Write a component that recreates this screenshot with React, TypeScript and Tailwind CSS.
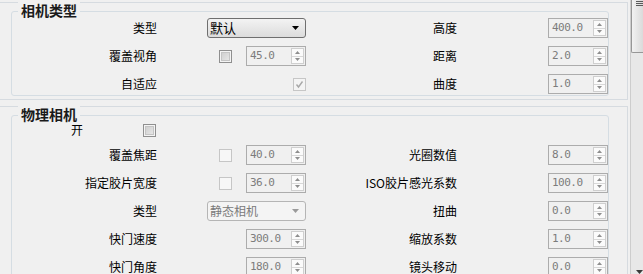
import React from 'react';

const cjk = { fontFamily: '"Noto Sans CJK SC", "Noto Sans", sans-serif' };
const mono = { fontFamily: '"DejaVu Sans Mono", "Liberation Mono", monospace' };

function Arrow({ up, color = '#8e8e8e' }: { up?: boolean; color?: string }) {
  return (
    <svg width="5" height="3" viewBox="0 0 5 3">
      <path d={up ? 'M2.5 0 L5 3 L0 3 Z' : 'M0 0 L5 0 L2.5 3 Z'} fill={color} />
    </svg>
  );
}

function Spin({ value }: { value: string }) {
  return (
    <div className="flex h-[20px] w-[60px] border border-[#acacac] bg-[#f0f0f0]">
      <div
        className="flex flex-1 items-center pl-[3px] text-[11px] tracking-[-0.5px] text-[#7c7c7c]"
        style={mono}
      >
        {value}
      </div>
      <div className="my-[1px] mr-[1px] flex w-[13px] flex-col border border-[#cfcfcf] bg-[#fbfbfb]">
        <div className="flex flex-1 items-center justify-center border-b border-[#d8d8d8]">
          <Arrow up />
        </div>
        <div className="flex flex-1 items-center justify-center">
          <Arrow />
        </div>
      </div>
    </div>
  );
}

function Check({ variant }: { variant: 'on' | 'off' | 'checked' }) {
  if (variant === 'on') {
    return (
      <div className="flex h-[13px] w-[13px] items-center justify-center border border-[#8f8f8f] bg-[#f4f4f4]">
        <div className="h-[9px] w-[9px] border border-[#c4c4c4] bg-linear-to-br from-[#d0d0d0] to-[#e6e6e6]" />
      </div>
    );
  }
  if (variant === 'checked') {
    return (
      <div className="flex h-[13px] w-[13px] items-center justify-center border border-[#c6c6c6] bg-[#f4f4f4]">
        <svg width="9" height="9" viewBox="0 0 9 9">
          <path d="M1.5 4.5 L3.5 7 L7.5 1.5" stroke="#a8a8a8" strokeWidth="1.4" fill="none" />
        </svg>
      </div>
    );
  }
  return <div className="h-[13px] w-[13px] border border-[#c6c6c6] bg-[#f7f7f7]" />;
}

function Combo({ text, disabled }: { text: string; disabled?: boolean }) {
  return (
    <div
      className={
        disabled
          ? 'flex h-[20px] w-[99px] items-center justify-between rounded-[3px] border border-[#b5b5b5] bg-[#f4f4f4] pl-[2px] pr-[6px] text-[12px] text-[#7a7a7a]'
          : 'flex h-[20px] w-[99px] items-center justify-between rounded-[3px] border border-[#6f6f6f] bg-linear-to-b from-[#f3f3f3] to-[#dcdcdc] pl-[2px] pr-[6px] text-[13px] text-black'
      }
      style={cjk}
    >
      <span className="leading-[18px]">{text}</span>
      <svg width="7" height="4" viewBox="0 0 7 4">
        <path d="M0 0 L7 0 L3.5 4 Z" fill={disabled ? '#9a9a9a' : '#000'} />
      </svg>
    </div>
  );
}

function Row({
  left,
  ctrl,
  right,
  value,
}: {
  left: string;
  ctrl: React.ReactNode;
  right: string;
  value: string;
}) {
  return (
    <div className="flex h-[20px] items-center text-[12px] leading-[20px] text-black" style={cjk}>
      <div className="w-[145px] text-right">{left}</div>
      <div className="flex w-[149px] items-center justify-end">{ctrl}</div>
      <div className="w-[151px] text-right">{right}</div>
      <div className="ml-[91px]">
        <Spin value={value} />
      </div>
    </div>
  );
}

function Group({ title, children, className }: { title: string; children: React.ReactNode; className: string }) {
  return (
    <div className={`relative w-[598px] rounded-[3px] border border-[#d5dde3] ${className}`}>
      <span
        className="absolute -top-[10px] left-[6px] bg-[#f0f0f0] px-[3px] text-[14px] font-bold leading-[16px] text-[#1a1a1a]"
        style={cjk}
      >
        {title}
      </span>
      {children}
    </div>
  );
}

function CheckSpin({ variant, value }: { variant: 'on' | 'off'; value: string }) {
  return (
    <div className="flex items-center gap-[14px]">
      <Check variant={variant} />
      <Spin value={value} />
    </div>
  );
}

export default function App() {
  return (
    <div className="flex h-[274px] w-[643px] overflow-hidden bg-[#f0f0f0]">
      <div className="flex w-[630px] flex-col">
        <div className="h-px bg-[#8c8c8c]" />

        {/* 相机类型 */}
        <div className="mt-[2px] w-[628px] border-y border-r border-[#d6dbe0] pb-[3px] pl-[11px] pt-[8px]">
          <Group title="相机类型" className="flex flex-col gap-[8px] pb-[1px] pt-[6px]">
            <Row left="类型" ctrl={<Combo text="默认" />} right="高度" value="400.0" />
            <Row left="覆盖视角" ctrl={<CheckSpin variant="on" value="45.0" />} right="距离" value="2.0" />
            <Row left="自适应" ctrl={<Check variant="checked" />} right="曲度" value="1.0" />
          </Group>
        </div>

        {/* 物理相机 */}
        <div className="mt-[6px] w-[628px] border-t border-r border-[#d6dbe0] pl-[11px] pt-[8px]">
          <Group title="物理相机" className="pt-[4px]">
            <div className="flex h-[20px] items-center text-[12px] leading-[20px] text-black" style={cjk}>
              <div className="w-[71px] text-right">开</div>
              <div className="ml-[60px]">
                <Check variant="on" />
              </div>
            </div>
            <div className="mt-[5px] flex flex-col gap-[8px] pb-[6px]">
              <Row left="覆盖焦距" ctrl={<CheckSpin variant="off" value="40.0" />} right="光圈数值" value="8.0" />
              <Row
                left="指定胶片宽度"
                ctrl={<CheckSpin variant="off" value="36.0" />}
                right="ISO胶片感光系数"
                value="100.0"
              />
              <Row left="类型" ctrl={<Combo text="静态相机" disabled />} right="扭曲" value="0.0" />
              <Row left="快门速度" ctrl={<Spin value="300.0" />} right="缩放系数" value="1.0" />
              <Row left="快门角度" ctrl={<Spin value="180.0" />} right="镜头移动" value="0.0" />
            </div>
          </Group>
        </div>
      </div>

      {/* scrollbar */}
      <div className="flex w-[13px] flex-col border-l border-[#cdcdcd] bg-[#e8e8e8]">
        <div className="flex h-[53px] flex-col gap-[1px] rounded-bl-[2px] border-b border-l border-[#979797] bg-linear-to-r from-[#f2f2f2] to-[#dadada] pl-[4px] pt-[1px]">
          <div className="h-px w-[7px] bg-[#5a5a5a]" />
          <div className="h-px w-[7px] bg-[#5a5a5a]" />
          <div className="h-px w-[7px] bg-[#5a5a5a]" />
        </div>
        <div className="mt-auto flex h-[5px] items-end pl-[5px]">
          <svg width="7" height="4" viewBox="0 0 7 4">
            <path d="M0 0 L7 0 L3.5 4 Z" fill="#3a3a3a" />
          </svg>
        </div>
      </div>
    </div>
  );
}
